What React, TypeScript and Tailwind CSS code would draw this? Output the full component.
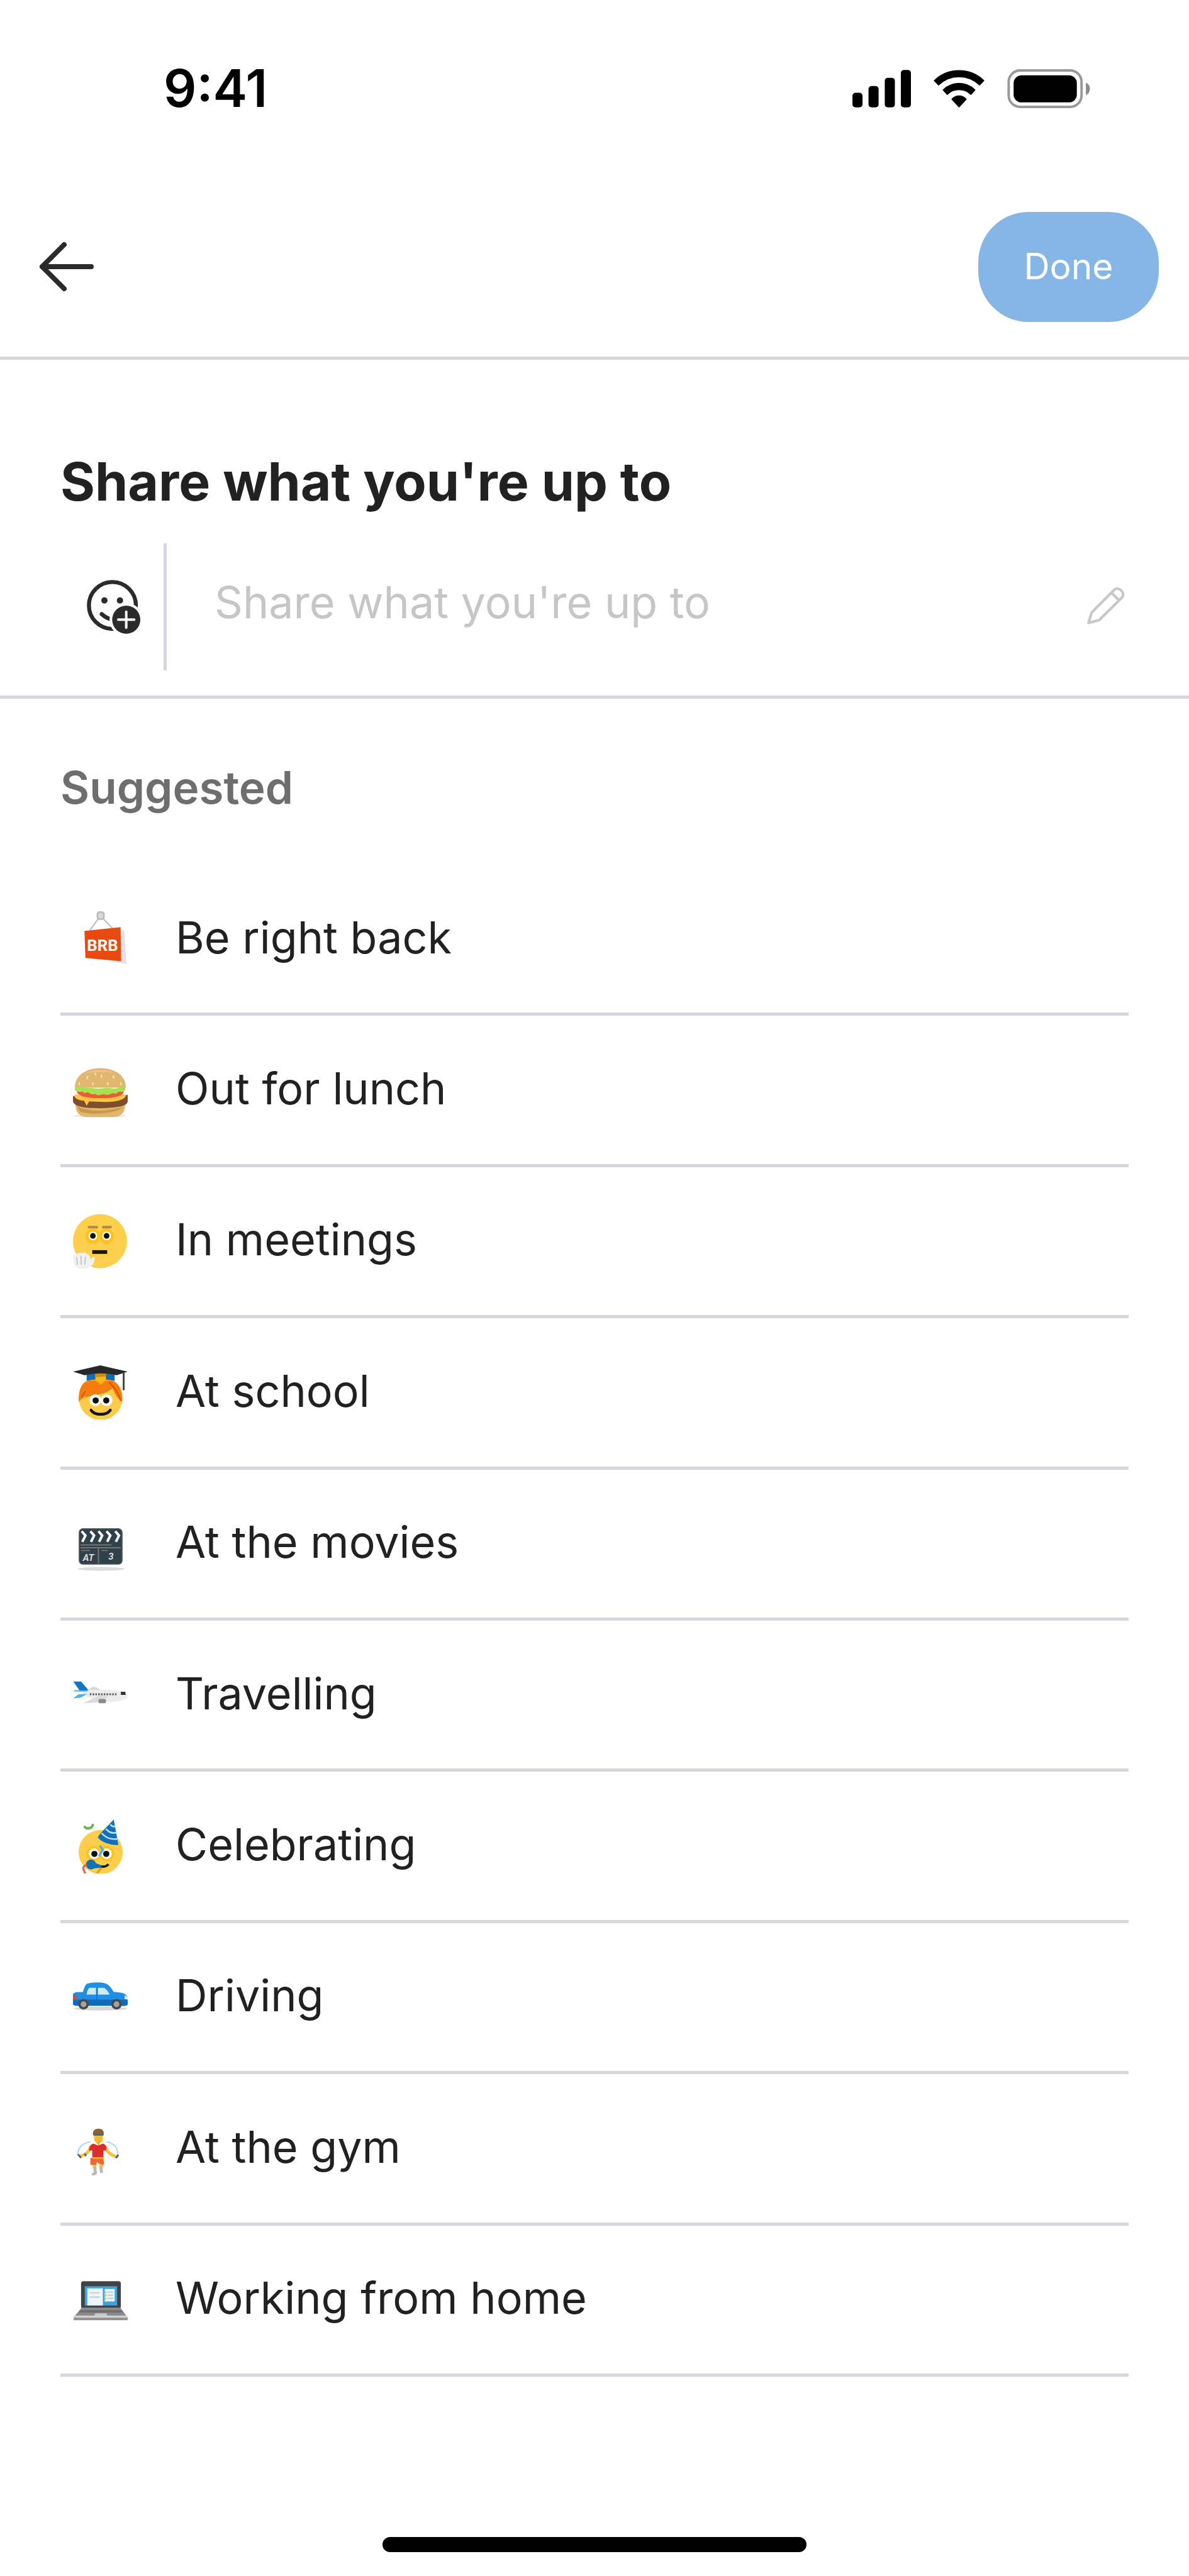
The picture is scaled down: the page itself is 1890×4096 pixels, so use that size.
import type { ReactNode } from 'react';

function SignalIcon() {
  return (
    <svg className="h-[60px] w-[93px]" viewBox="0 0 284 182" aria-hidden="true">
      <rect x="0" y="111" width="49" height="71" rx="15" />
      <rect x="78" y="78" width="49" height="104" rx="15" />
      <rect x="157" y="38" width="49" height="144" rx="15" />
      <rect x="235" y="0" width="49" height="182" rx="15" />
    </svg>
  );
}

function WifiIcon() {
  return (
    <svg
      className="h-[60px] w-[81px]"
      viewBox="0 0 246 182"
      stroke="#000"
      strokeWidth="4"
      strokeLinejoin="round"
      aria-hidden="true"
    >
      <path d="M3 52 A172 172 0 0 1 243 52 L222 74 A142 142 0 0 0 24 74 Z" />
      <path d="M46 97 A109 109 0 0 1 200 97 L180 119 A82 82 0 0 0 66 119 Z" />
      <path d="M88 142 A45 45 0 0 1 158 142 L123 179 Z" />
    </svg>
  );
}

function BatteryIcon() {
  return (
    <svg className="h-[62px] w-[132px]" viewBox="0 0 402 190" aria-hidden="true">
      <rect x="6" y="6" width="355" height="178" rx="56" fill="none" stroke="#999" strokeWidth="12" />
      <rect x="30" y="30" width="308" height="132" rx="38" />
      <path d="M382 66 C408 76 408 116 382 126 Z" fill="#8c8c8c" />
    </svg>
  );
}

function BackIcon() {
  return (
    <svg
      className="h-[78px] w-[88px]"
      viewBox="0 0 88 78"
      fill="none"
      stroke="#2b2b2b"
      strokeWidth="8"
      strokeLinecap="round"
      strokeLinejoin="round"
      aria-hidden="true"
    >
      <path d="M83 39 H5 M40 4 L5 39 L40 74" />
    </svg>
  );
}

function AddEmojiIcon() {
  return (
    <svg className="h-[86px] w-[86px]" viewBox="0 0 258 258" fill="none" stroke="#2b2b2b" aria-hidden="true">
      <circle cx="122" cy="122" r="112" strokeWidth="19" />
      <circle cx="84" cy="98" r="15" fill="#2b2b2b" stroke="none" />
      <circle cx="158" cy="98" r="15" fill="#2b2b2b" stroke="none" />
      <path d="M71 163 Q92 183 122 190" strokeWidth="19" strokeLinecap="round" />
      <circle cx="188" cy="190" r="80" fill="#fff" stroke="none" />
      <circle cx="188" cy="190" r="67" fill="#2b2b2b" stroke="none" />
      <path d="M188 152 V228 M150 190 H226" stroke="#fff" strokeWidth="12" strokeLinecap="round" />
    </svg>
  );
}

function PencilIcon() {
  return (
    <svg
      className="h-[60px] w-[60px]"
      viewBox="0 0 184 184"
      fill="none"
      stroke="#c8c8c8"
      strokeWidth="13"
      strokeLinejoin="round"
      aria-hidden="true"
    >
      <path d="M22 126 L132 15 C155 -4 190 30 169 54 L58 163 L7 176 Z" />
      <path d="M119 29 L155 65" />
    </svg>
  );
}

const art: Record<string, ReactNode> = {
  brb: (
    <>
      <path d="M80 30 L83 32 L86 85 L70 82 Z" fill="#e3e3e3" />
      <path d="M27 31 L42 10 M64 28 L47 10" stroke="#b9bcbf" strokeWidth="2" fill="none" />
      <rect x="38" y="0" width="13" height="14" rx="5" fill="#b5babd" />
      <rect x="40.500" y="2.500" width="8" height="9" rx="3" fill="#d5d9dc" />
      <path d="M18.500 31.500 L76.600 25.500 L77.500 80.500 L20 75 Z" fill="#e9490f" />
      <text x="47.500" y="64" textAnchor="middle" fontFamily="Roboto, sans-serif" fontSize="26" fontWeight="700" fill="#fff">
        BRB
      </text>
    </>
  ),
  burger: (
    <>
      <ellipse cx="44" cy="85" rx="42" ry="3" fill="#e6e6e6" />
      <path d="M4 66 H84 C84 80 78 87 64 87 H24 C10 87 4 80 4 66 Z" fill="#e0b56c" />
      <path d="M6 70 C25 79 55 79 80 71 C70 82 30 84 12 79 Z" fill="#c9974a" />
      <path d="M0 53 C20 60 68 60 88 51 V62 C87 69 76 72 44 73 C12 73 2 69 0 62 Z" fill="#7d4f2b" />
      <path d="M2 51 H85 C86 60 66 63 50 63 L26 62 L22 69 L18 61 C8 60 2 57 2 51 Z" fill="#ffc545" />
      <path d="M6 46 H82 C80 55 62 57 44 57 C24 57 8 54 6 46 Z" fill="#ee5a33" />
      <path d="M3 40 C3 19 22 8.500 44 8.500 C66 8.500 85 19 85 40 Z" fill="#e1b66f" />
      <path d="M20 17 C30 10 56 10 68 17 C52 13 34 14 20 17 Z" fill="#eec290" />
      <path
        d="M3 41 C14 35 22 42 30 40 C42 44 52 38 62 41 C70 43 78 37 84 38 V44 C80 48 74 44 69 50 C62 46 58 54 52 51 C46 49 42 55 36 50 C28 53 25 44 19 49 C14 43 8 49 3 44 Z"
        fill="#a8e052"
      />
      <path
        d="M23 22 v3 M36 17 v2 M46 20 v3 M65 21 v3 M10 32 v3 M32 32 v3 M56 32 v3 M77 32 v3"
        stroke="#f8dfae"
        strokeWidth="2.400"
        strokeLinecap="round"
      />
    </>
  ),
  meeting: (
    <>
      <circle cx="43.500" cy="44" r="43.500" fill="#fdcf4d" />
      <circle cx="32" cy="36" r="12" fill="#ffc21c" />
      <circle cx="54" cy="36" r="12" fill="#ffc21c" />
      <path d="M24 21.500 H40 M47 21.500 H62" stroke="#b4874b" strokeWidth="4" />
      <circle cx="32" cy="35.500" r="7" fill="#fff" />
      <circle cx="54" cy="35.500" r="7" fill="#fff" />
      <circle cx="32" cy="35.500" r="4.600" fill="#111" />
      <circle cx="54" cy="35.500" r="4.600" fill="#111" />
      <path d="M31 61.500 H55" stroke="#1c1512" strokeWidth="6" />
      <path
        d="M0 68 C3 63 6 67 8 64 C11 60 14 65 17 62 C21 62 22 66 25 65 L29 73 L33 69 C38 70 33 83 27 86 C18 90 6 89 2 83 Z"
        fill="#f1f1f1"
      />
      <path d="M6 70 L7 82 M13 68 L13 82 M20 69 L19 82" stroke="#c4c4c4" strokeWidth="1.800" />
    </>
  ),
  school: (
    <>
      <circle cx="44.500" cy="54" r="35" fill="#fdcb48" />
      <path
        d="M9.500 60 C8 38 16 26 27 25 H62 C73 28 81 42 79 60 C73 55 67 49 64 38 C52 48 34 50 20 51 C16 53 12 56 9.500 60 Z"
        fill="#f67c0b"
      />
      <path d="M58 28 C66 36 73 44 77 58 M20 42 L14 52" stroke="#e2490f" strokeWidth="2" fill="none" />
      <path d="M20 51 C36 49 50 45 62 36" stroke="#cf8d20" strokeWidth="2" fill="none" />
      <path d="M22 13 H67 V26 C58 23 30 23 22 26 Z" fill="#0f6cb6" />
      <path d="M36 13 H53 V25 L44.500 32 L36 25 Z" fill="#fbb714" />
      <path d="M36 13 H53 V19 L36 20 Z" fill="#c98d16" />
      <path d="M0 11 L44 1 L88 11 L70 17 C55 13 34 13 19 17 Z" fill="#282828" />
      <path d="M81.500 12 V41" stroke="#444" strokeWidth="3" />
      <circle cx="36" cy="57" r="9.500" fill="#fff" />
      <circle cx="54" cy="57" r="9.500" fill="#fff" />
      <circle cx="36.500" cy="57.500" r="5" fill="#111" />
      <circle cx="53.500" cy="57.500" r="5" fill="#111" />
      <path d="M29 73 C35 82 54 82 60 73" stroke="#111" strokeWidth="4.500" fill="none" strokeLinecap="round" />
    </>
  ),
  movies: (
    <>
      <ellipse cx="45" cy="84.500" rx="38" ry="3" fill="#dcdcdc" />
      <rect x="10" y="20" width="69" height="57" rx="6" fill="#2f424c" stroke="#595959" strokeWidth="1.500" />
      <path
        d="M14 24 L20 31 L15 41 M28 24 L34 31 L29 41 M41 24 L47 31 L42 41 M54 24 L60 31 L55 41 M68 24 L74 31 L69 41"
        stroke="#fff"
        strokeWidth="4"
        fill="none"
      />
      <path d="M12 46 H62 M12 50.500 H77 M41 50 V76 M13 55 H27 M46 55 H56" stroke="#77736f" strokeWidth="2" fill="none" />
      <g fontFamily="Roboto, sans-serif" fontSize="15" fontStyle="italic" fontWeight="700" fill="#dadada">
        <text x="16" y="72">AT</text>
        <text x="57" y="70">3</text>
      </g>
    </>
  ),
  plane: (
    <>
      <path d="M24 36 L33 31 C38 32 44 35 46 38 Z" fill="#d9d9d9" />
      <path d="M10 38 C30 35 62 36 74 38 C82 40 88 44 88 48 C86 54 60 57 46 55 C32 53 20 47 10 38 Z" fill="#ececec" />
      <path d="M46 44 L58 47 L38 57 L16 58 Z" fill="#dcdcdc" />
      <path d="M0.500 23 H13 L25 37 L11 38 Z" fill="#0f75c4" />
      <path d="M0 39 H24 L22 37 L3 37 Z" fill="#4aa5e8" />
      <path d="M0 50 L9 43.500 L23 43 L12 49 Z" fill="#4fb1f5" />
      <path d="M27 43.500 H70" stroke="#5c5c5c" strokeWidth="3" strokeDasharray="2.600 1.900" />
      <path d="M77 39.500 H84 L85 44.500 H77 Z" fill="#333" />
      <rect x="41" y="51" width="12" height="7" rx="2" fill="#8b8b8b" />
    </>
  ),
  party: (
    <>
      <circle cx="44.500" cy="53.500" r="35.500" fill="#fdcd4b" />
      <circle cx="34" cy="56" r="12" fill="#ffc01c" />
      <circle cx="54" cy="56" r="12" fill="#ffc01c" />
      <path d="M65.500 1 L73 42 C62 43 46 38 40 30 C42 24 60 8 65.500 1 Z" fill="#1271b9" />
      <path
        d="M60 9 C62 12 65 13 68 12 M53 16 C58 22 64 24 70 22 M46 23 C53 31 62 34 72 32"
        stroke="#bfe2f7"
        strokeWidth="2.600"
        fill="none"
      />
      <path d="M19 13 C22 17 30 16 32 10" stroke="#62b94b" strokeWidth="4" fill="none" strokeLinecap="round" />
      <circle cx="34" cy="56" r="8.500" fill="#fff" />
      <circle cx="54" cy="56" r="8.500" fill="#fff" />
      <circle cx="34.500" cy="56.500" r="5" fill="#111" />
      <circle cx="53.500" cy="56.500" r="5" fill="#111" />
      <path d="M43 43 L48 50 L42 60" stroke="#4fb1ee" strokeWidth="3.600" fill="none" />
      <path d="M42 76 C48 78 54 77 57 73" stroke="#161616" strokeWidth="4" fill="none" />
      <path d="M38 89 L46 78" stroke="#d59e30" strokeWidth="3" />
      <circle cx="29" cy="73.500" r="8" fill="#1271b9" />
      <path d="M31 69 L46 75 L45 79 L31 80 Z" fill="#1271b9" />
      <path d="M22 74 C14 77 16 81 20 88" stroke="#ee5f3c" strokeWidth="3.200" fill="none" />
    </>
  ),
  car: (
    <>
      <ellipse cx="44" cy="62.500" rx="43" ry="3" fill="#d7d7d7" />
      <path
        d="M0 39 C3 35 9 36 16 36 C18 29 20 23 24 22 C34 20 46 20 52 22 C59 24 62 31 66 36 C77 36 86 38 88 45 V56 C86 59 80 58 76 58 H10 C4 58 0 57 0 55 Z"
        fill="#1f8fe6"
      />
      <path d="M0 48 H88 V56 C86 59 80 58 76 58 H10 C4 58 0 57 0 55 Z" fill="#0e6cba" />
      <path d="M22 40 C23 34 24 30 27 29 H37 V40 Z" fill="#cfeafa" />
      <path d="M40 29 H50 C54 31 57 36 59 40 H40 Z" fill="#cfeafa" />
      <path d="M38.500 28 V57" stroke="#0e6cba" strokeWidth="1.200" />
      <path d="M1 41 H5 V48 H0 Z" fill="#e5402a" />
      <path d="M83 41 L88 44 V48 L83 47 Z" fill="#d6ecfa" />
      <circle cx="17" cy="55.500" r="8.500" fill="#4a4a4a" />
      <circle cx="70" cy="55.500" r="8.500" fill="#4a4a4a" />
      <circle cx="17" cy="55.500" r="4.600" fill="#a5a5a5" />
      <circle cx="70" cy="55.500" r="4.600" fill="#a5a5a5" />
    </>
  ),
  gym: (
    <>
      <path d="M8 56 C7 44 15 36 28 34 M54 34 C66 36 73 44 72 56" stroke="#a9d6f2" strokeWidth="2" fill="none" />
      <path
        d="M28 42 C26 50 22 54 12 57 M52 42 C54 50 60 55 70 58"
        stroke="#fcbf35"
        strokeWidth="5"
        fill="none"
        strokeLinecap="round"
      />
      <path d="M8 54 L13 60 M69 60 L73 55 M19 53 L21 57" stroke="#4b6a80" strokeWidth="3" />
      <path d="M34 68 L35 76 M46 68 L45 76" stroke="#fcbf35" strokeWidth="6" />
      <path d="M35 75 L36 84 L31 88 M45 75 L46 84" stroke="#b9b9b9" strokeWidth="5" fill="none" />
      <path d="M28 60 H49 L50 71 L41 69 L39 66 L37 71 L28 71 Z" fill="#f0653c" />
      <path d="M33 37 L40 40 L48 37 C53 38 55 44 53 48 L49 48 V60 H31 V48 L26 48 C26 43 28 38 33 37 Z" fill="#dd2c2c" />
      <path d="M31 60 H49" stroke="#fba52f" strokeWidth="3" />
      <rect x="34" y="17" width="14" height="19" rx="6" fill="#fcbb2f" />
      <path d="M37 34 H44 L41 41 Z" fill="#f0a92c" />
      <path d="M32 23 C31 16 36 13 41 13 C47 13 51 17 49 23 Z" fill="#8f5e2c" />
      <path d="M33 22.500 H49" stroke="#3f6f93" strokeWidth="3.400" />
    </>
  ),
  laptop: (
    <>
      <rect x="13" y="14.500" width="64" height="44" rx="4" fill="#414446" />
      <rect x="19" y="22.500" width="52" height="31" fill="#38a5e2" />
      <path d="M23 26 H48 V53.500 H23 Z" fill="#eef5fa" />
      <rect x="51" y="27" width="16" height="20" fill="#eef5fa" />
      <path d="M27 33 H43 M27 40 H43 M55 32 H65 M55 37 H65 M55 42 H65" stroke="#c2cbd2" strokeWidth="2" />
      <path d="M52.500 31 V44" stroke="#a9cf3f" strokeWidth="2" strokeDasharray="3 2" />
      <path d="M14 57 H76 L86 70 H3 Z" fill="#8c8c8c" />
      <path d="M12 61 H78 L81 65 H9 Z" fill="#6f6f6f" />
      <path d="M36 66 H54 L55 70 H34 Z" fill="#c9c9c9" />
      <rect x="1" y="70" width="87" height="3.500" fill="#d2d2d2" />
      <rect x="1" y="73" width="87" height="4" rx="1" fill="#8f8f8f" />
    </>
  ),
};

const suggestions = [
  { icon: 'brb', label: 'Be right back' },
  { icon: 'burger', label: 'Out for lunch' },
  { icon: 'meeting', label: 'In meetings' },
  { icon: 'school', label: 'At school' },
  { icon: 'movies', label: 'At the movies' },
  { icon: 'plane', label: 'Travelling' },
  { icon: 'party', label: 'Celebrating' },
  { icon: 'car', label: 'Driving' },
  { icon: 'gym', label: 'At the gym' },
  { icon: 'laptop', label: 'Working from home' },
];

export default function App() {
  return (
    <div className="flex min-h-screen flex-col bg-white font-['Inter','Liberation_Sans',sans-serif] text-[#212121]">
      <header className="border-b-[5px] border-[#d4d8dd]">
        <div className="flex h-[281px] items-center justify-between pr-[157px] pl-[260px] text-black">
          <span className="text-[82px] leading-[96px] font-semibold">9:41</span>
          <div className="flex items-center gap-9">
            <SignalIcon />
            <WifiIcon />
            <BatteryIcon />
          </div>
        </div>
        <div className="flex h-[286px] items-center justify-between pr-12 pl-[62px]">
          <button type="button" aria-label="Back">
            <BackIcon />
          </button>
          <button
            type="button"
            className="h-[175px] w-[287px] rounded-[80px] bg-[#85b6e6] text-[57px] leading-[72px] text-white"
          >
            Done
          </button>
        </div>
      </header>

      <section className="border-b-[5px] border-[#d4d8dd] px-24 pt-36 pb-10">
        <h1 className="text-[84px] leading-[100px] font-bold">
          <label htmlFor="status">Share what you're up to</label>
        </h1>
        <div className="mt-12 flex h-[202px] items-center">
          <button type="button" aria-label="Add emoji" className="pr-9 pl-[42px]">
            <AddEmojiIcon />
          </button>
          <div className="w-[5px] self-stretch bg-[#d4d8dd]" />
          <input
            id="status"
            type="text"
            placeholder="Share what you're up to"
            className="h-full min-w-0 flex-1 pb-4 pl-[76px] text-[70px] outline-none placeholder:text-[#c6c6c8]"
          />
          <button type="button" aria-label="Edit" className="px-1.5 pb-1">
            <PencilIcon />
          </button>
        </div>
      </section>

      <main className="flex flex-1 flex-col px-24 pt-24">
        <h2 className="mb-[78px] text-[71px] leading-[90px] font-semibold text-[#6e6e6e]">Suggested</h2>
        <ul className="grid flex-1 auto-rows-fr">
          {suggestions.map((s) => (
            <li key={s.label} className="border-b-[5px] border-[#d4d8dd]">
              <button type="button" className="flex h-full w-full items-center gap-[76px] pl-5 text-left">
                <svg className="h-[87px] w-[87px] shrink-0" viewBox="0 0 88 88" aria-hidden="true">
                  {art[s.icon]}
                </svg>
                <span className="pb-1 text-[70px] leading-[90px]">{s.label}</span>
              </button>
            </li>
          ))}
        </ul>
      </main>

      <footer className="flex h-[317px] items-end justify-center pb-[38px]">
        <div className="h-6 w-[674px] rounded-full bg-black" />
      </footer>
    </div>
  );
}
